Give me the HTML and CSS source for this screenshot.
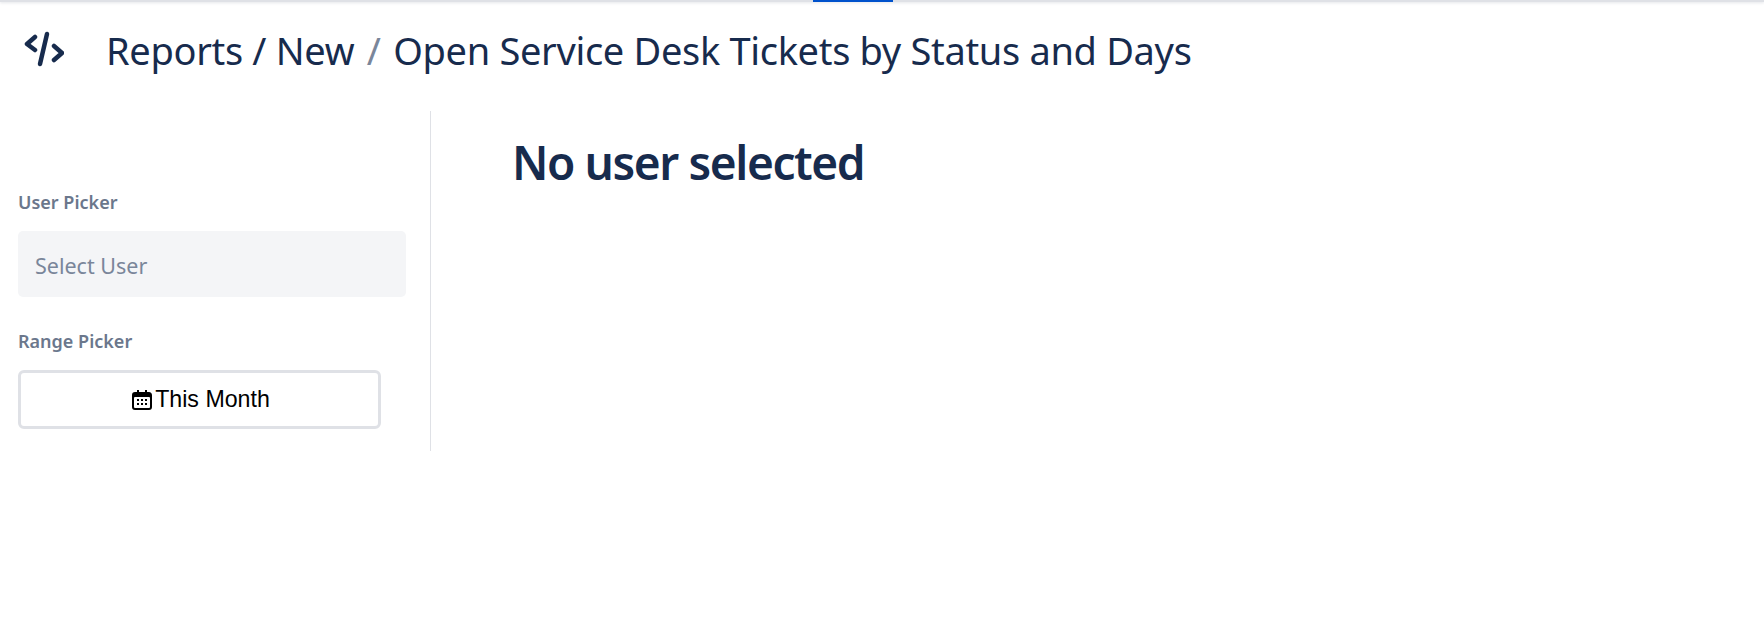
FILE: index.html
```html
<!DOCTYPE html>
<html lang="en">
<head>
    <meta charset="UTF-8">
    <title>Open Service Desk Tickets by Status and Days</title>
    <link rel="stylesheet" href="styles.css">
</head>
<body>
    <div class="top-bar"><span class="top-bar-active"></span></div>
    <header class="header">
        <svg class="logo" viewBox="0 0 40 36" width="40" height="36" fill="none" stroke="#172b4d" stroke-width="4.500" stroke-linecap="round" stroke-linejoin="round">
            <path d="M11 6 3 13l8 6"/>
            <path d="M23 3 16 33"/>
            <path d="M30 15l8 7-8 7"/>
        </svg>
        <h2 class="breadcrumb">Reports / New <span class="sep">/</span> Open Service Desk Tickets by Status and Days</h2>
    </header>
    <div class="layout">
        <aside class="sidebar">
            <label class="field-label">User Picker</label>
            <div class="select-box">Select User</div>
            <label class="field-label range-label">Range Picker</label>
            <button class="range-btn">
                <svg viewBox="0 0 20 20" width="20" height="20">
                    <path fill="#000" d="M5 0h2v2h6V0h2v2h1.500A3 3 0 0 1 20 5v12a3 3 0 0 1-3 3H3a3 3 0 0 1-3-3V5a3 3 0 0 1 3-3h2z"/>
                    <rect x="2" y="7" width="16" height="11" rx="1" fill="#fff"/>
                    <g fill="#000">
                        <rect x="5" y="9" width="2" height="2"/><rect x="9" y="9" width="2" height="2"/><rect x="13" y="9" width="2" height="2"/>
                        <rect x="5" y="13" width="2" height="2"/><rect x="9" y="13" width="2" height="2"/><rect x="13" y="13" width="2" height="2"/>
                    </g>
                </svg>
                <span>This Month</span>
            </button>
        </aside>
        <main class="content">
            <h1 class="empty-title">No user selected</h1>
        </main>
    </div>
</body>
</html>
```

FILE: styles.css
```css
body {
    margin: 0;
    font-family: "Noto Sans", "Open Sans", sans-serif;
    background-color: #fff;
    color: #172b4d;
}
.top-bar {
    height: 2px;
    background-color: #dfe1e6;
    box-shadow: 0 1px 3px #dfe1e6;
    padding-left: 813px;
}
.top-bar-active {
    display: block;
    width: 80px;
    height: 2px;
    background-color: #0052cc;
}
.header {
    display: flex;
    align-items: center;
    height: 96px;
    padding-left: 24px;
    gap: 42px;
}
.logo {
    flex: none;
    margin-bottom: 3px;
}
.breadcrumb {
    margin: 0;
    font-size: 38px;
    font-weight: 400;
    letter-spacing: -0.32px;
    white-space: nowrap;
}
.sep {
    margin: 0 3px;
    color: #7a869a;
}
.layout {
    display: flex;
    margin-top: 13px;
}
.sidebar {
    box-sizing: border-box;
    width: 431px;
    height: 340px;
    padding: 79px 24px 0 18px;
    border-right: 1px solid #dfe1e6;
}
.field-label {
    display: block;
    font-size: 18px;
    font-weight: 600;
    line-height: 24px;
    color: #6b778c;
}
.select-box {
    box-sizing: border-box;
    height: 66px;
    margin-top: 17px;
    padding-left: 17px;
    line-height: 70px;
    font-size: 21.5px;
    color: #7a869a;
    background-color: #f4f5f7;
    border-radius: 5px;
}
.range-label {
    margin-top: 32px;
}
.range-btn {
    display: flex;
    align-items: center;
    justify-content: center;
    gap: 3px;
    box-sizing: border-box;
    width: 363px;
    height: 59px;
    margin-top: 17px;
    padding: 0 0 0 3px;
    font-family: "Liberation Sans", Arial, sans-serif;
    font-size: 23.2px;
    color: #000;
    background-color: #fff;
    border: 3px solid #dfe1e6;
    border-radius: 6px;
}
.content {
    padding: 19px 0 0 81px;
}
.empty-title {
    margin: 0;
    font-size: 46px;
    font-weight: 600;
    line-height: 64px;
    letter-spacing: -1.4px;
}
```
